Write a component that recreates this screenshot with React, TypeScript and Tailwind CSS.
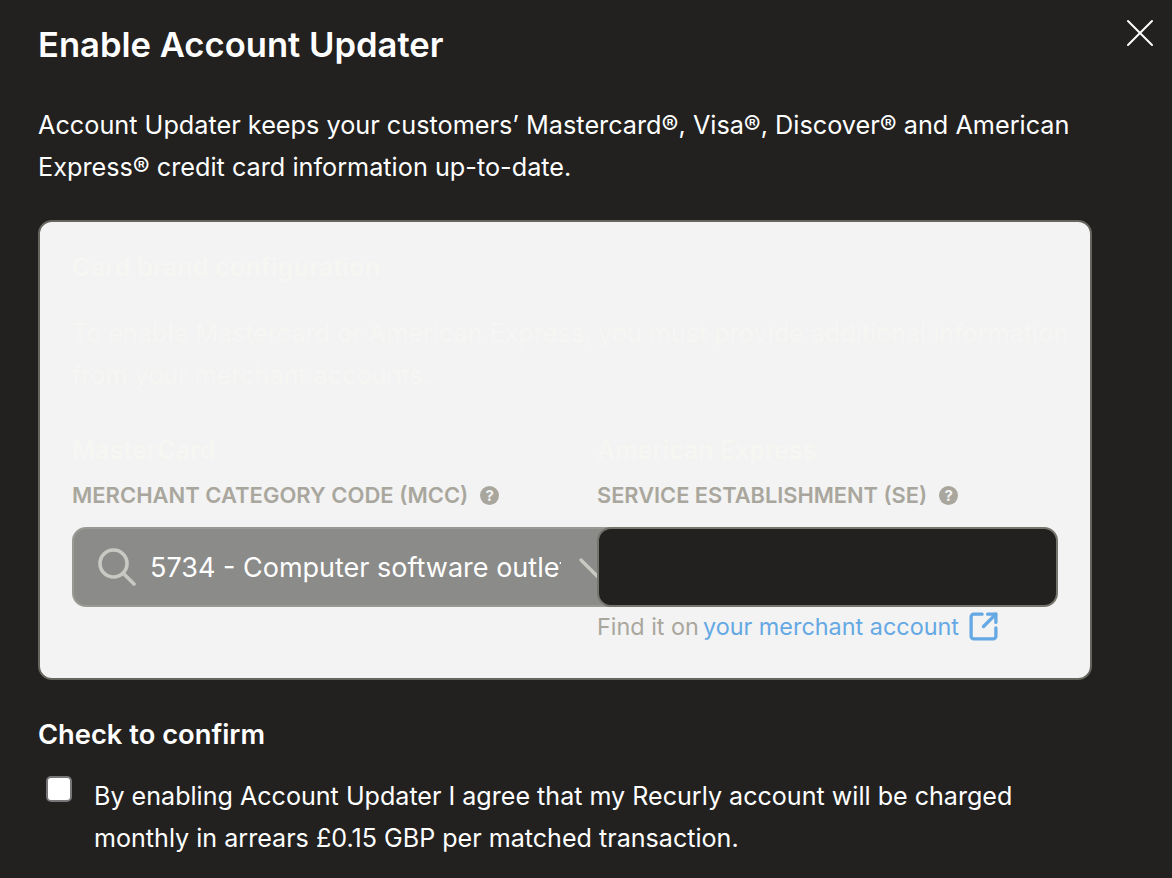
import { X, SquareArrowOutUpRight } from "lucide-react";

function HelpDot() {
    return (
        <span className="w-[19px] h-[19px] rounded-full bg-[#a9a79d] text-[#f3f3f3] flex items-center justify-center text-[15px] font-bold leading-none">
            ?
        </span>
    );
}

function FieldLabel({ text, size }: { text: string; size: string }) {
    return (
        <div className={`h-[24px] flex items-center gap-[12px] font-semibold text-[#a9a79d] whitespace-nowrap ${size}`}>
            {text}
            <HelpDot />
        </div>
    );
}

export default function App() {
    return (
        <div className="relative w-[1172px] h-[878px] overflow-hidden bg-[#222120] text-white px-[38px] font-['Inter',sans-serif]">
            <button className="absolute top-[9px] right-[8px] text-white">
                <X size={48} strokeWidth={1} />
            </button>

            <h1 className="pt-[24px] text-[34.6px] leading-[40px] font-semibold">
                Enable Account Updater
            </h1>

            <p className="mt-[40px] text-[25.25px] leading-[42px] w-[1060px]">
                Account Updater keeps your customers’ Mastercard®, Visa®,
                Discover® and American Express® credit card information
                up-to-date.
            </p>

            <div className="mt-[32px] w-[1054px] h-[460px] rounded-[14px] border-2 border-[#66665e] bg-[#f3f3f3] pl-[32px] pr-[18px] pt-[28px] text-[#f6f6f3]">
                <h2 className="text-[25.4px] leading-[34px] font-semibold">
                    Card brand configuration
                </h2>
                <p className="mt-[28px] text-[25.15px] leading-[42px] whitespace-nowrap">
                    To enable Mastercard or American Express, you must provide additional information
                    <br />
                    from your merchant accounts.
                </p>

                <div className="mt-[39px] grid grid-cols-[525px_461px]">
                    <div>
                        <div className="text-[25.2px] leading-[30px] font-semibold">
                            MasterCard
                        </div>
                        <div className="mt-[18px]">
                            <FieldLabel text="MERCHANT CATEGORY CODE (MCC)" size="text-[22px]" />
                        </div>
                        <div className="mt-[20px] w-[560px] h-[80px] rounded-[14px] border-2 border-[#9a9a95] bg-[#8b8b89] flex items-center pl-[24px] text-white">
                            <svg width="38" height="38" viewBox="0 0 38 38" fill="none" className="shrink-0 text-[#c9c9c3]">
                                <circle cx="15.5" cy="15.5" r="13.5" stroke="currentColor" strokeWidth="3.6" />
                                <path d="M25.5 25.5 L36 36" stroke="currentColor" strokeWidth="3.6" strokeLinecap="round" />
                            </svg>
                            <span className="ml-[14px] pt-[2px] w-[411px] overflow-hidden whitespace-nowrap text-[27px]">
                                5734 - Computer software outlets
                            </span>
                            <svg width="40" height="40" viewBox="0 0 40 40" fill="none" className="ml-[17px] mt-[16px] shrink-0 text-[#c9c9c3]">
                                <path d="M3 5 L20 22 L37 5" stroke="currentColor" strokeWidth="3.4" strokeLinecap="round" strokeLinejoin="round" />
                            </svg>
                        </div>
                    </div>
                    <div className="relative">
                        <div className="text-[25px] leading-[30px] font-semibold">
                            American Express
                        </div>
                        <div className="mt-[18px]">
                            <FieldLabel text="SERVICE ESTABLISHMENT (SE)" size="text-[21.8px]" />
                        </div>
                        <div className="mt-[20px] h-[80px] rounded-[14px] border-2 border-[#75746d] bg-[#222120]" />
                        <div className="mt-[3px] flex items-center text-[23.4px] leading-[32px] whitespace-nowrap text-[#a9a79d]">
                            Find it on
                            <span className="ml-[4px] text-[#64a8e4]">your merchant account</span>
                            <SquareArrowOutUpRight size={33} strokeWidth={2.4} className="ml-[8px] text-[#64a8e4]" />
                        </div>
                    </div>
                </div>
            </div>

            <div className="mt-[38px] text-[27.3px] leading-[34px] font-semibold">
                Check to confirm
            </div>

            <div className="mt-[22px] flex items-start">
                <span className="mt-[2px] ml-[8px] w-[26px] h-[26px] shrink-0 rounded-[5px] border-2 border-[#77777a] bg-white" />
                <p className="ml-[22px] w-[960px] text-[25.1px] leading-[42px] mt-[1px]">
                    By enabling Account Updater I agree that my Recurly account
                    will be charged monthly in arrears £0.15 GBP per matched
                    transaction.
                </p>
            </div>
        </div>
    );
}
